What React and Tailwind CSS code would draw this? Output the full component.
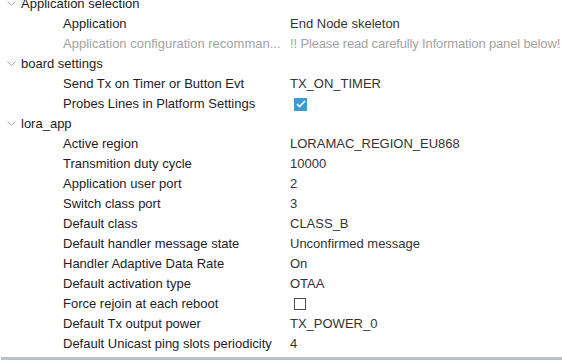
import React from 'react';

const groups = [
  {
    name: 'Application selection',
    rows: [
      { label: 'Application', value: 'End Node skeleton' },
      { label: 'Application configuration recomman...', value: '!! Please read carefully Information panel below!', muted: true },
    ],
  },
  {
    name: 'board settings',
    rows: [
      { label: 'Send Tx on Timer or Button Evt', value: 'TX_ON_TIMER' },
      { label: 'Probes Lines in Platform Settings', check: true },
    ],
  },
  {
    name: 'lora_app',
    rows: [
      { label: 'Active region', value: 'LORAMAC_REGION_EU868' },
      { label: 'Transmition duty cycle', value: '10000' },
      { label: 'Application user port', value: '2' },
      { label: 'Switch class port', value: '3' },
      { label: 'Default class', value: 'CLASS_B' },
      { label: 'Default handler message state', value: 'Unconfirmed message' },
      { label: 'Handler Adaptive Data Rate', value: 'On' },
      { label: 'Default activation type', value: 'OTAA' },
      { label: 'Force rejoin at each reboot', check: false },
      { label: 'Default Tx output power', value: 'TX_POWER_0' },
      { label: 'Default Unicast ping slots periodicity', value: '4' },
    ],
  },
];

function Chevron() {
  return (
    <svg className="w-[9px] h-[6px] text-[#a8a8a8]" viewBox="0 0 9 6" fill="none" stroke="currentColor" strokeWidth="1">
      <path d="M0.5 0.5l4 4 4-4" />
    </svg>
  );
}

function CheckBox({ checked }) {
  if (checked) {
    return (
      <div className="w-[13px] h-[13px] bg-[#3d9bd8] flex items-center justify-center">
        <svg className="w-[10px] h-[8px]" viewBox="0 0 10 8" fill="none" stroke="white" strokeWidth="1.6">
          <path d="M1 4l2.6 2.6L9 1" />
        </svg>
      </div>
    );
  }
  return <div className="w-[12px] h-[12px] border border-[#4a4a4a] bg-white" />;
}

export default function App() {
  return (
    <div className="w-[562px] h-[360px] bg-white overflow-hidden relative font-['Liberation_Sans',Arial,sans-serif] text-[13px]">
      <div className="-mt-[6px]">
        {groups.map((g) => (
          <div key={g.name}>
            <div className="h-[20px] flex items-center text-[#1c1c1c]">
              <div className="w-[21px] pl-[7px] flex items-center">
                <Chevron />
              </div>
              <span>{g.name}</span>
            </div>
            {g.rows.map((r) => (
              <div key={r.label} className="h-[20px] flex items-center">
                <div className={`w-[290px] pl-[63px] shrink-0 whitespace-nowrap overflow-hidden ${r.muted ? 'text-[#a3a3a3]' : 'text-[#1c1c2a]'}`}>
                  {r.label}
                </div>
                <div className={`whitespace-nowrap ${r.muted ? 'text-[#a3a3a3] tracking-[-0.15px]' : 'text-[#333]'}`}>
                  {r.check === undefined ? r.value : (
                    <div className="pl-[4px]"><CheckBox checked={r.check} /></div>
                  )}
                </div>
              </div>
            ))}
          </div>
        ))}
      </div>
      <div className="absolute left-[1px] right-0 bottom-0 h-[3px] bg-[#b9c1c6]" />
    </div>
  );
}
